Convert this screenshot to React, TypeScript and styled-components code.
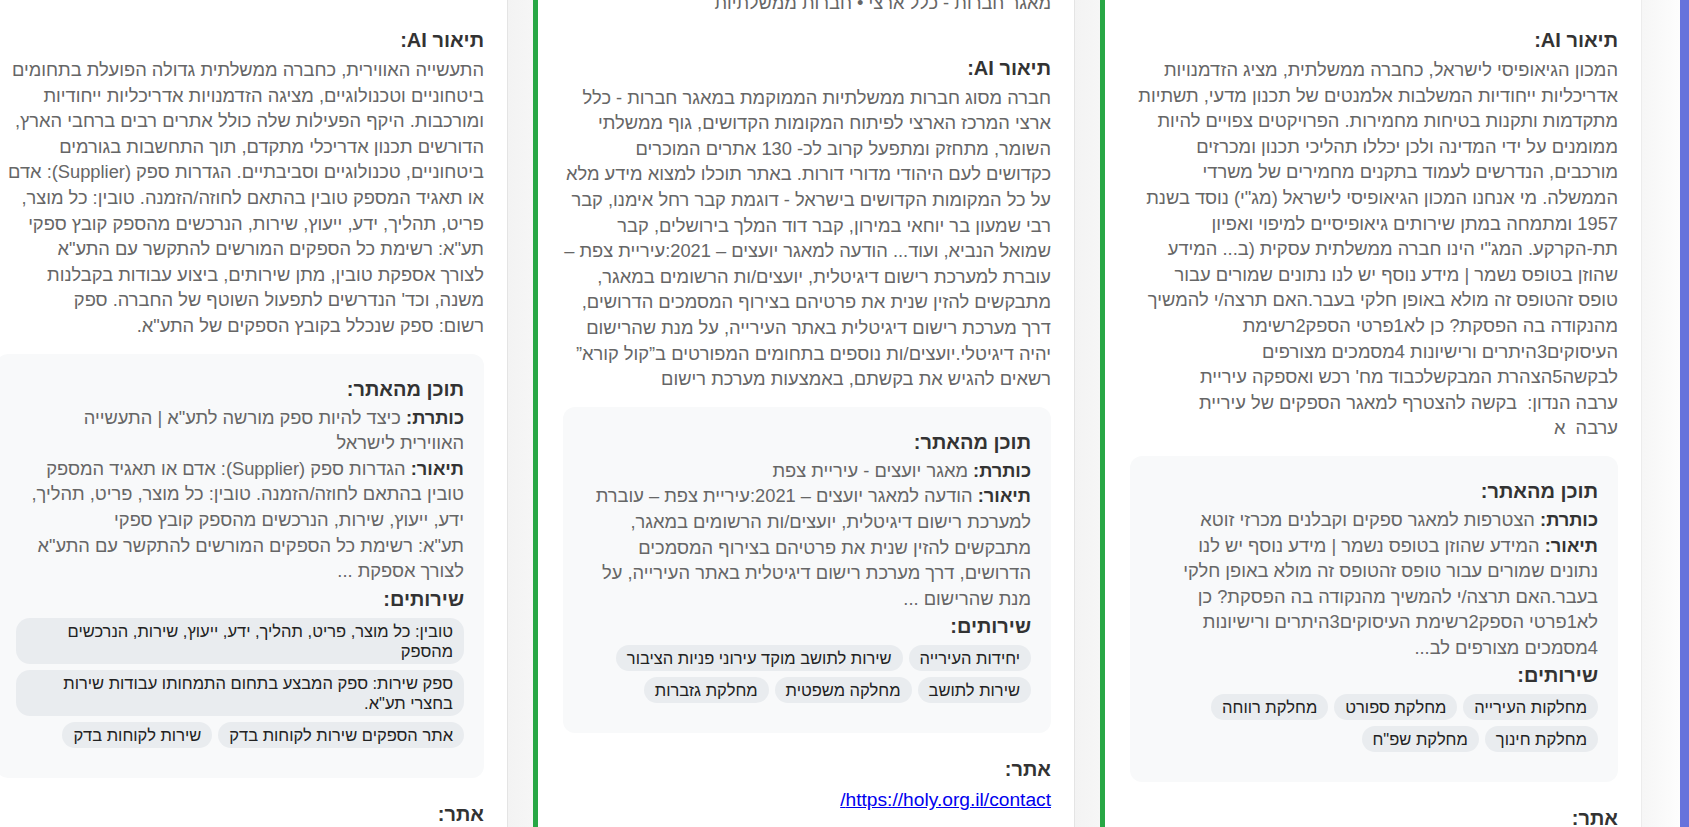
import React from 'react';
import styled, { createGlobalStyle } from 'styled-components';

const Global = createGlobalStyle`
  html, body { margin: 0; padding: 0; height: 100%; overflow: hidden; }
  body {
    background: #6673dc;
    font-family: "Liberation Sans", "Open Sans", "DejaVu Sans", sans-serif;
  }
  #root { height: 100%; }
`;

const Page = styled.div`
  display: flex;
  height: 100vh;
  width: 100vw;
  padding-right: 9px;
  box-sizing: border-box;
`;

const Board = styled.main`
  flex: 1;
  display: flex;
  justify-content: flex-end;
  overflow: hidden;
  background: #ffffff;
`;

const Column = styled.section<{ $selected?: boolean }>`
  flex-shrink: 0;
  display: flex;
  height: 100%;
  border-left: ${(p) => (p.$selected ? '5px solid #28a745' : '0')};
  border-right: ${(p) => (p.$selected ? '5px solid #28a745' : '0')};
`;

const Sheet = styled.div`
  width: 536px;
  box-sizing: border-box;
  padding: 0 23px 0 25px;
  direction: rtl;
  text-align: right;
  background: #ffffff;
  overflow: hidden;
`;

const Track = styled.div<{ $w: number; $light?: boolean }>`
  width: ${(p) => p.$w}px;
  flex-shrink: 0;
  box-sizing: border-box;
  border-left: 1px solid ${(p) => (p.$light ? '#ececec' : '#e4e4e4')};
  background: ${(p) =>
    p.$light
      ? 'linear-gradient(to right, #f6f6f6, #fdfdfd)'
      : 'linear-gradient(to right, #f3f3f3, #f6f6f6)'};
`;

const Scroll = styled.div<{ $top: number }>`
  margin-top: ${(p) => p.$top}px;
`;

const Subtitle = styled.p`
  margin: 0 0 39px;
  font-size: 18.3px;
  line-height: 25.6px;
  color: #666666;
  white-space: nowrap;
`;

const SectionTitle = styled.h3<{ $after?: boolean }>`
  margin: ${(p) => (p.$after ? '23px 0 5px' : '0 0 4px')};
  font-size: 20px;
  line-height: 26px;
  font-weight: 700;
  color: #333333;
`;

const Body = styled.p`
  margin: 0 0 15px;
  font-size: 18.3px;
  line-height: 25.6px;
  color: #666666;
  white-space: pre;
`;

const InfoBox = styled.div`
  background: #f8f9fa;
  border-radius: 12px;
  padding: 22px 20px 20px;
`;

const BoxTitle = styled.h4<{ $sub?: boolean }>`
  margin: ${(p) => (p.$sub ? '2px 0 0' : '0 0 3px')};
  font-size: 20px;
  line-height: 26px;
  font-weight: 700;
  color: #333333;
`;

const Field = styled.p`
  margin: 0;
  font-size: 18.3px;
  line-height: 25.6px;
  color: #666666;
  white-space: pre-line;
`;

const Label = styled.strong`
  color: #333333;
  font-weight: 700;
`;

const Tags = styled.div`
  display: flex;
  flex-wrap: wrap;
  gap: 6px;
  margin: 6px 0 10px;
`;

const Tag = styled.span`
  background: #e9ecef;
  color: #222222;
  font-size: 16.5px;
  line-height: 20px;
  padding: 3px 11px;
  border-radius: 14px;
  max-width: 100%;
  box-sizing: border-box;
`;

const SiteLink = styled.a`
  font-size: 19.2px;
  line-height: 25.6px;
  color: #0000ee;
  text-decoration: underline;
`;

type Card = {
  top: number;
  selected?: boolean;
  track: number;
  lightTrack?: boolean;
  subtitle?: string;
  ai: string[];
  title: string;
  desc: string;
  tags: string[];
  link?: string;
};

const cards: Card[] = [
  {
    top: 27,
    track: 26,
    ai: [
      'התעשייה האווירית, כחברה ממשלתית גדולה הפועלת בתחומים',
      'ביטחוניים וטכנולוגיים, מציגה הזדמנויות אדריכליות ייחודיות',
      'ומורכבות. היקף הפעילות שלה כולל אתרים רבים ברחבי הארץ,',
      'הדורשים תכנון אדריכלי מתקדם, תוך התחשבות בגורמים',
      'ביטחוניים, טכנולוגיים וסביבתיים. הגדרות ספק (Supplier): אדם',
      'או תאגיד המספק טובין בהתאם לחוזה/הזמנה. טובין: כל מוצר,',
      'פריט, תהליך, ידע, ייעוץ, שירות, הנרכשים מהספק קובץ ספקי',
      'תע"א: רשימת כל הספקים המורשים להתקשר עם התע"א',
      'לצורך אספקת טובין, מתן שירותים, ביצוע עבודות בקבלנות',
      "משנה, וכד' הנדרשים לתפעול השוטף של החברה. ספק",
      'רשום: ספק שנכלל בקובץ הספקים של התע"א.',
    ],
    title: 'כיצד להיות ספק מורשה לתע"א | התעשייה האווירית לישראל',
    desc:
      'הגדרות ספק (Supplier): אדם או תאגיד המספק טובין בהתאם לחוזה/הזמנה. טובין: כל מוצר, פריט, תהליך, ידע, ייעוץ, שירות, הנרכשים מהספק קובץ ספקי\nתע"א: רשימת כל הספקים המורשים להתקשר עם התע"א לצורך אספקת ...',
    tags: [
      'טובין: כל מוצר, פריט, תהליך, ידע, ייעוץ, שירות, הנרכשים מהספק',
      'ספק שירות: ספק המבצע בתחום התמחותו עבודות שירות בחצרי תע"א.',
      'אתר הספקים שירות לקוחות בדק',
      'שירות לקוחות בדק',
    ],
  },
  {
    top: -10,
    selected: true,
    track: 26,
    subtitle: 'מאגר חברות - כלל ארצי • חברות ממשלתיות',
    ai: [
      'חברה מסוג חברות ממשלתיות הממוקמת במאגר חברות - כלל',
      'ארצי המרכז הארצי לפיתוח המקומות הקדושים, גוף ממשלתי',
      'השומר, מתחזק ומתפעל קרוב לכ- 130 אתרים המוכרים',
      'כקדושים לעם היהודי מדורי דורות. באתר תוכלו למצוא מידע מלא',
      'על כל המקומות הקדושים בישראל - דוגמת קבר רחל אימנו, קבר',
      'רבי שמעון בר יוחאי במירון, קבר דוד המלך בירושלים, קבר',
      'שמואל הנביא, ועוד... הודעה למאגר יועצים – 2021:עיריית צפת –',
      'עוברת למערכת רישום דיגיטלית, יועצים/ות הרשומים במאגר,',
      'מתבקשים להזין שנית את פרטיהם בצירוף המסמכים הדרושים,',
      'דרך מערכת רישום דיגיטלית באתר העירייה, על מנת שהרישום',
      'יהיה דיגיטלי.יועצים/ות נוספים בתחומים המפורטים ב”קול קורא”',
      'רשאים להגיש את בקשתם, באמצעות מערכת רישום',
    ],
    title: 'מאגר יועצים - עיריית צפת',
    desc:
      'הודעה למאגר יועצים – 2021:עיריית צפת – עוברת למערכת רישום דיגיטלית, יועצים/ות הרשומים במאגר, מתבקשים להזין שנית את פרטיהם בצירוף המסמכים הדרושים, דרך מערכת רישום דיגיטלית באתר העירייה, על מנת שהרישום ...',
    tags: ['יחידות העירייה', 'שירות לתושב מוקד עירוני פניות הציבור', 'שירות לתושב', 'מחלקה משפטית', 'מחלקת גזברות'],
    link: 'https://holy.org.il/contact/',
  },
  {
    top: 27,
    track: 39,
    lightTrack: true,
    ai: [
      'המכון הגיאופיסי לישראל, כחברה ממשלתית, מציג הזדמנויות',
      'אדריכליות ייחודיות המשלבות אלמנטים של תכנון מדעי, תשתיות',
      'מתקדמות ותקנות בטיחות מחמירות. הפרויקטים צפויים להיות',
      'ממומנים על ידי המדינה ולכן יכללו תהליכי תכנון ומכרזים',
      'מורכבים, הנדרשים לעמוד בתקנים מחמירים של משרדי',
      'הממשלה. מי אנחנו המכון הגיאופיסי לישראל (מג"י) נוסד בשנת',
      '1957 ומתמחה במתן שירותים גיאופיסיים למיפוי ואפיון',
      'תת-הקרקע. המג"י הינו חברה ממשלתית עסקית (ב... המידע',
      'שהוזן בטופס נשמר | מידע נוסף יש לנו נתונים שמורים עבור',
      'טופס זהטופס זה מולא באופן חלקי בעבר.האם תרצה/י להמשיך',
      'מהנקודה בה הפסקת? כן לא1פרטי הספק2רשימת',
      'העיסוקים3היתרים ורישיונות 4מסמכים מצורפים',
      "לבקשה5הצהרת המבקשלכבוד מח' רכש ואספקה עיריית",
      'ערבה הנדון:  בקשה להצטרף למאגר הספקים של עיריית',
      'ערבה  א',
    ],
    title: 'הצטרפות למאגר ספקים וקבלנים מכרזי זוטא',
    desc:
      'המידע שהוזן בטופס נשמר | מידע נוסף יש לנו נתונים שמורים עבור טופס זהטופס זה מולא באופן חלקי בעבר.האם תרצה/י להמשיך מהנקודה בה הפסקת? כן לא1פרטי הספק2רשימת העיסוקים3היתרים ורישיונות 4מסמכים מצורפים לב...',
    tags: ['מחלקות העירייה', 'מחלקת ספורט', 'מחלקת רווחה', 'מחלקת חינוך', 'מחלקת שפ"ח'],
  },
];

function CardColumn({ card }: { card: Card }) {
  return (
    <Column $selected={card.selected}>
      <Sheet>
        <Scroll $top={card.top}>
          {card.subtitle && <Subtitle>{card.subtitle}</Subtitle>}
          <SectionTitle>תיאור AI:</SectionTitle>
          <Body>{card.ai.join('\n')}</Body>
          <InfoBox>
            <BoxTitle>תוכן מהאתר:</BoxTitle>
            <Field>
              <Label>כותרת:</Label> {card.title}
            </Field>
            <Field>
              <Label>תיאור:</Label> {card.desc}
            </Field>
            <BoxTitle $sub>שירותים:</BoxTitle>
            <Tags>
              {card.tags.map((t) => (
                <Tag key={t}>{t}</Tag>
              ))}
            </Tags>
          </InfoBox>
          <SectionTitle $after>אתר:</SectionTitle>
          {card.link && <SiteLink href={card.link}>{card.link}</SiteLink>}
        </Scroll>
      </Sheet>
      <Track $w={card.track} $light={card.lightTrack} />
    </Column>
  );
}

export default function App() {
  return (
    <>
      <Global />
      <Page>
        <Board>
          {cards.map((c, i) => (
            <CardColumn key={i} card={c} />
          ))}
        </Board>
      </Page>
    </>
  );
}
